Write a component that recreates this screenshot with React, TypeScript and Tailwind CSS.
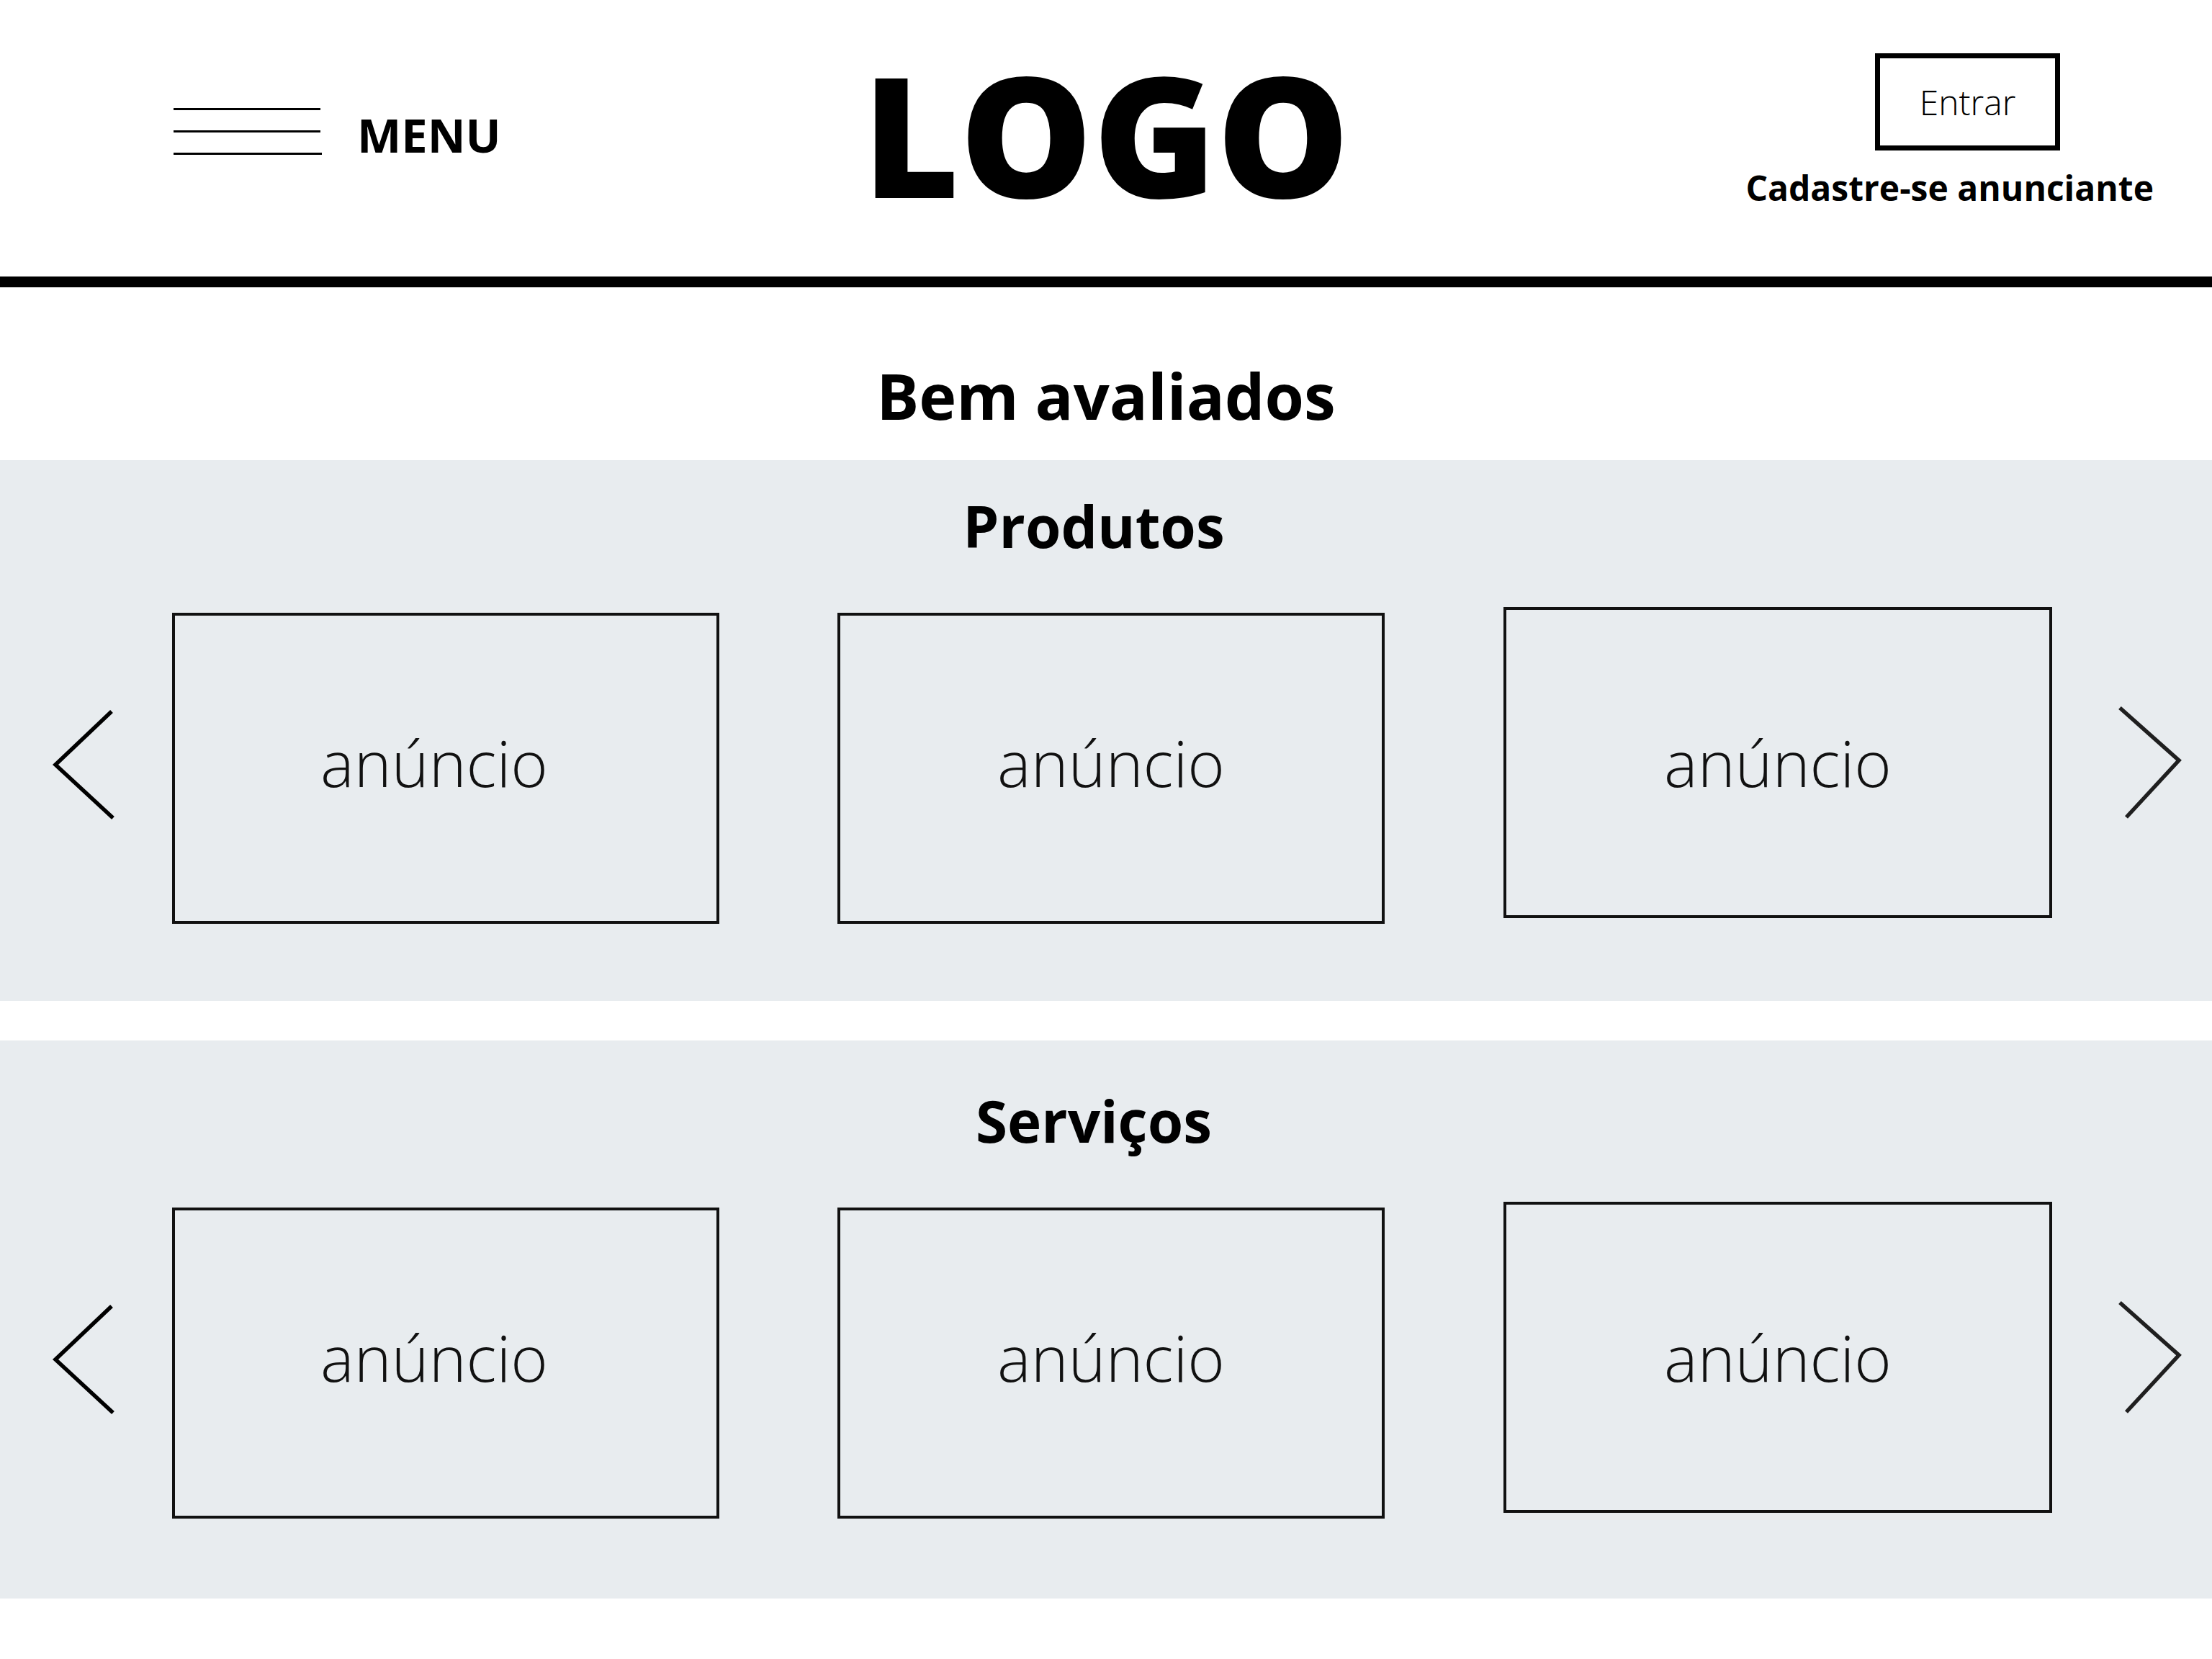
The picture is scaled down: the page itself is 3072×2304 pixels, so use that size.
import React from "react";

const font = "font-['Open_Sans','Noto_Sans',sans-serif]";

function ChevronLeft() {
  return (
    <svg
      width="85"
      height="160"
      viewBox="0 0 85 160"
      className="mt-[139px] ml-[74px] shrink-0 overflow-visible"
    >
      <polyline
        points="81,6 3,80 83,154"
        fill="none"
        stroke="#000"
        strokeWidth="5.5"
        strokeLinejoin="miter"
        strokeMiterlimit="10"
      />
    </svg>
  );
}

function ChevronRight() {
  return (
    <svg
      width="85"
      height="160"
      viewBox="0 0 85 160"
      className="mt-[136px] ml-[93px] shrink-0 overflow-visible"
    >
      <polyline
        points="1,4 83,77 10,156"
        fill="none"
        stroke="#1f1f1f"
        strokeWidth="5.5"
        strokeLinejoin="miter"
        strokeMiterlimit="10"
      />
    </svg>
  );
}

function CardRow() {
  return (
    <div className="mt-[73px] flex items-start">
      <ChevronLeft />
      <div className="ml-[80px] mt-[8px] w-[760px] h-[432px] shrink-0 border-[4px] border-[#111] flex items-center justify-center pb-[17px] pr-[32px]">
        <span className="text-[88px] font-light leading-none text-[#111]">anúncio</span>
      </div>
      <div className="ml-[164px] mt-[8px] w-[760px] h-[432px] shrink-0 border-[4px] border-[#111] flex items-center justify-center pb-[17px]">
        <span className="text-[88px] font-light leading-none text-[#111]">anúncio</span>
      </div>
      <div className="ml-[165px] w-[762px] h-[432px] shrink-0 border-[4px] border-[#111] flex items-center justify-center">
        <span className="text-[88px] font-light leading-none text-[#111]">anúncio</span>
      </div>
      <ChevronRight />
    </div>
  );
}

export default function App() {
  return (
    <div className={`${font} w-[3072px] min-h-[2304px] bg-white text-black`}>
      {/* Header */}
      <header className="h-[384px] grid grid-cols-3">
        <div className="flex items-start">
          <div className="ml-[241px] mt-[150px] flex flex-col gap-[28px]">
            <div className="w-[204px] h-[3px] bg-black" />
            <div className="w-[204px] h-[3px] bg-black" />
            <div className="w-[206px] h-[3px] bg-black" />
          </div>
          <div className="ml-[49px] mt-[155px] text-[65px] font-bold leading-none">
            MENU
          </div>
        </div>
        <div className="flex justify-center items-start">
          <div className="mt-[69px] text-[232px] font-extrabold leading-none">LOGO</div>
        </div>
        <div className="flex flex-col items-end pr-[81px]">
          <div className="mt-[74px] mr-[130px] w-[257px] h-[135px] border-[7px] border-black flex items-center justify-center">
            <span className="text-[48px] font-light leading-none">Entrar</span>
          </div>
          <div className="mt-[28px] text-[48px] font-bold leading-none">Cadastre-se anunciante</div>
        </div>
      </header>
      <div className="h-[15px] bg-black" />

      {/* Title */}
      <div className="h-[240px] pt-[106px] text-center">
        <h1 className="text-[88px] font-bold leading-none">Bem avaliados</h1>
      </div>

      {/* Produtos */}
      <section className="bg-[#e8ecef] pt-[51px] pb-[107px]">
        <h2 className="text-center text-[80px] font-bold leading-none pr-[34px]">Produtos</h2>
        <CardRow />
      </section>

      <div className="h-[55px]" />

      {/* Serviços */}
      <section className="bg-[#e8ecef] pt-[71px] pb-[111px]">
        <h2 className="text-center text-[80px] font-bold leading-none pr-[34px]">Serviços</h2>
        <CardRow />
      </section>
    </div>
  );
}
